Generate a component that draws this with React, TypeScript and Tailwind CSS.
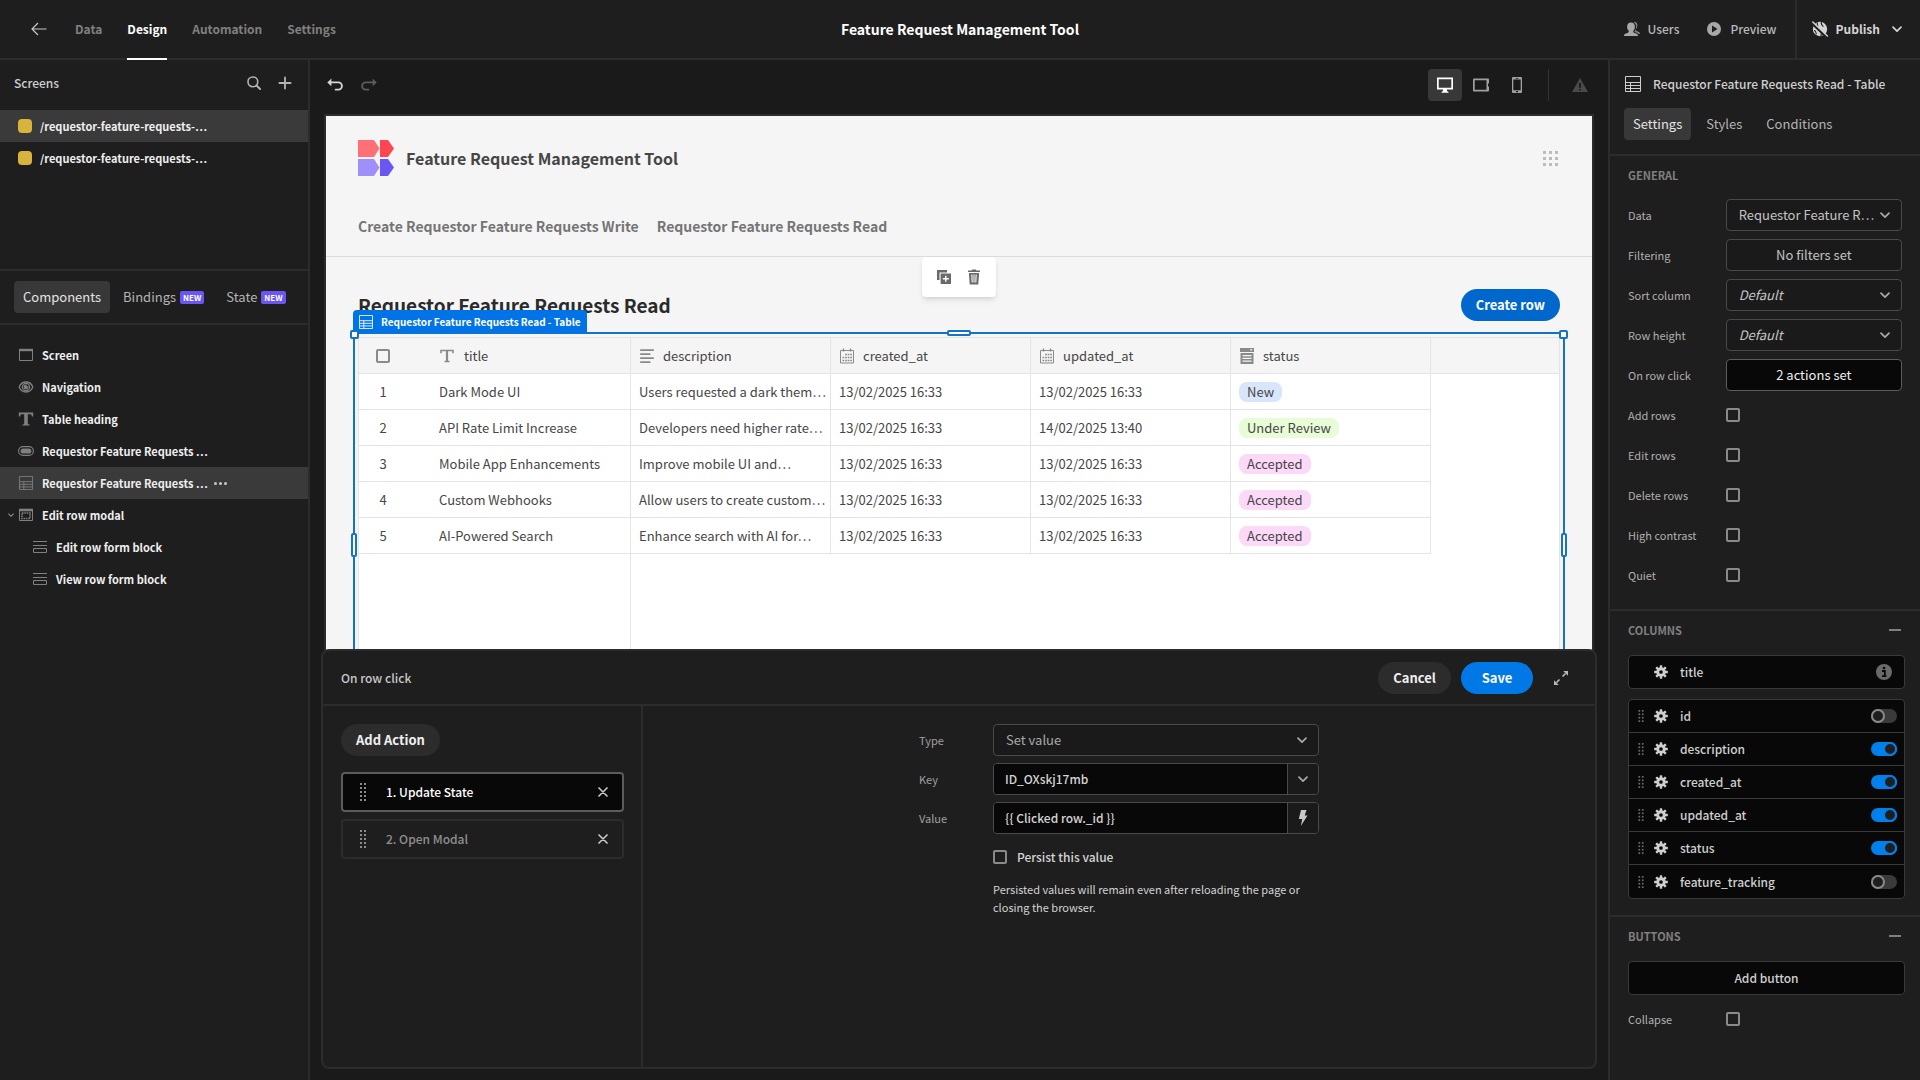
import React, { useState } from 'react';
import clsx from 'clsx';

type IconProps = { className?: string };

const ArrowLeftIcon = ({ className }: IconProps) => (
  <svg viewBox="0 0 16 16" className={className} fill="none" stroke="currentColor" strokeWidth="1.2">
    <path d="M15.5 8H1.2M7 2 1 8l6 6" />
  </svg>
);

const SearchIcon = ({ className }: IconProps) => (
  <svg viewBox="0 0 16 16" className={className} fill="none" stroke="currentColor" strokeWidth="1.8">
    <circle cx="6.7" cy="6.7" r="5.6" />
    <path d="m10.9 10.9 4 4" strokeWidth="2.2" strokeLinecap="round" />
  </svg>
);

const PlusIcon = ({ className }: IconProps) => (
  <svg viewBox="0 0 14 14" className={className} stroke="currentColor" strokeWidth="1.8" strokeLinecap="round">
    <path d="M7 1.4v11.2M1.4 7h11.2" />
  </svg>
);

const UndoIcon = ({ className }: IconProps) => (
  <svg viewBox="0 0 16 16" className={className} fill="none" stroke="currentColor" strokeWidth="1.9">
    <path d="M4 5.4h7.3a3.6 3.6 0 0 1 0 7.2H8.6" strokeLinecap="round" />
    <path d="M.3 5.4 4.4 1.6v7.6Z" fill="currentColor" stroke="none" />
  </svg>
);

const ChevronDownIcon = ({ className }: IconProps) => (
  <svg viewBox="0 0 10 10" className={className} fill="none" stroke="currentColor" strokeWidth="1.7" strokeLinecap="round" strokeLinejoin="round">
    <path d="M1 3.2 5 7.2l4-4" />
  </svg>
);

const CloseIcon = ({ className }: IconProps) => (
  <svg viewBox="0 0 12 12" className={className} stroke="currentColor" strokeWidth="2" strokeLinecap="round">
    <path d="m1.2 1.2 9.6 9.6M10.8 1.2l-9.6 9.6" />
  </svg>
);

const UsersIcon = ({ className }: IconProps) => (
  <svg viewBox="0 0 16 16" className={className} fill="currentColor">
    <path d="M11.4 12.2c-1.6-.5-2.2-.9-2.2-1.8 0-.5.3-.8.7-1.3.6-.8 1-2 1-3.4C10.9 3 9.4 1.5 7 1.5S3.1 3 3.1 5.7c0 1.4.4 2.6 1 3.4.4.5.7.8.7 1.3 0 .9-.6 1.3-2.2 1.8C.7 12.8 0 13.4 0 15h14c0-1.6-.7-2.2-2.6-2.8Z" />
    <path d="M10.2.8c1.9 0 3.2 1.3 3.2 3.7 0 1.3-.4 2.4-1 3.1-.3.4-.6.7-.6 1.2 0 .8.5 1.1 2 1.6 1.6.5 2.2 1.1 2.2 2.6h-1.5c-.6-.8-1.5-1.2-2.6-1.5-1.1-.4-1.3-.6-1.3-1.1 0-.3.2-.5.5-1 .7-1 1.100-2.300 1.100-3.700 0-2-.8-3.500-2.500-4.500Z" opacity=".75" />
  </svg>
);

const PlayCircleIcon = ({ className }: IconProps) => (
  <svg viewBox="0 0 14 14" className={className} fill="currentColor" fillRule="evenodd">
    <path d="M7 0a7 7 0 1 0 0 14A7 7 0 0 0 7 0ZM5 3.6 10.5 7 5 10.4Z" />
  </svg>
);

const GlobeStrikeIcon = ({ className }: IconProps) => (
  <svg viewBox="0 0 16 16" className={className}>
    <circle cx="8" cy="8" r="7.2" fill="currentColor" />
    <path d="M5.5 1.5c-1 2 .8 2.6.2 4.5M9.8 1.2c-1.8 1.6.4 2.8 1.6 4.6M2 9.5c1.6 0 2 1.5 2.3 3.8M9 15c-.5-2.2 1-3 1.8-3.8" stroke="#1e1e1e" strokeWidth="1.1" fill="none" />
    <path d="M.3 2.5 14 15.7" stroke="#1e1e1e" strokeWidth="2.4" />
    <path d="M.8 1 15.4 15" stroke="currentColor" strokeWidth="1.5" strokeLinecap="round" />
  </svg>
);

const TableIcon = ({ className }: IconProps) => (
  <svg viewBox="0 0 16 16" className={className} fill="none" stroke="currentColor" strokeWidth="1">
    <path d="M.5.5h15v15H.5ZM.5 6.5h15M.5 9.5h15M.5 12.5h15M5.5 6.5v9" />
  </svg>
);

const ScreenIcon = ({ className }: IconProps) => (
  <svg viewBox="0 0 16 14" className={className} fill="none" stroke="currentColor" strokeWidth="1">
    <path d="M1.5 1.5h13v11h-13Z" />
    <path d="M1 2h14" strokeWidth="2.4" />
  </svg>
);

const EyeIcon = ({ className }: IconProps) => (
  <svg viewBox="0 0 16 14" className={className} fill="none" stroke="currentColor" strokeWidth="1.3">
    <path d="M8 2C4.5 2 2.2 4.4 1.2 7c1 2.6 3.3 5 6.8 5s5.8-2.4 6.8-5C13.8 4.4 11.5 2 8 2Z" />
    <circle cx="8" cy="7" r="3.6" />
    <path d="M8 5.2A1.8 1.8 0 1 0 9.8 7L8 7Z" fill="currentColor" />
  </svg>
);

const TextIcon = ({ className }: IconProps) => (
  <svg viewBox="0 0 16 14" className={className} fill="currentColor">
    <path d="M.8.5h14.4v4h-1.3c-.2-1.6-.6-2.2-2-2.2H9.8v9c0 1 .4 1.2 1.8 1.3v.9H4.4v-.9c1.4-.1 1.8-.3 1.8-1.3v-9H4.1c-1.4 0-1.8.6-2 2.2H.8Z" />
  </svg>
);

const ThinTextIcon = ({ className }: IconProps) => (
  <svg viewBox="0 0 14 14" className={className} fill="none" stroke="currentColor" strokeWidth="1.6">
    <path d="M1 4.3V1.5h12v2.8M4.5 12.5h5" />
    <path d="M7 1.5v11" strokeWidth="2.2" />
  </svg>
);

const ButtonIcon = ({ className }: IconProps) => (
  <svg viewBox="0 0 16 14" className={className}>
    <rect x=".6" y="2.6" width="14.8" height="8.8" rx="4.4" fill="none" stroke="currentColor" strokeWidth="1.1" />
    <rect x="2.6" y="4.4" width="10.8" height="5.2" rx="2.6" fill="currentColor" />
  </svg>
);

const ModalIcon = ({ className }: IconProps) => (
  <svg viewBox="0 0 16 14" className={className} fill="none" stroke="currentColor" strokeWidth="1">
    <path d="M1.5 1.5h13v11h-13Z" />
    <path d="M1 2h14" strokeWidth="2.6" />
    <rect x="4" y="5" width="8" height="5.5" strokeWidth="1.6" strokeDasharray="1.5 .8" />
  </svg>
);

const FormIcon = ({ className }: IconProps) => (
  <svg viewBox="0 0 14 14" className={className} fill="none" stroke="currentColor" strokeWidth="1">
    <path d="M0 1.5h14M0 5.5h14M.5 8.5h13v4H.5Z" />
  </svg>
);

const LinesIcon = ({ className }: IconProps) => (
  <svg viewBox="0 0 14 14" className={className} stroke="currentColor" strokeWidth="1.5">
    <path d="M1 1.8h12M1 5.3h9M1 8.8h12M1 12.300h9" />
  </svg>
);

const CalendarIcon = ({ className }: IconProps) => (
  <svg viewBox="0 0 16 16" className={className} fill="none" stroke="currentColor" strokeWidth="1">
    <path d="M1.5 2.5h13v12.5h-13Z" />
    <path d="M4.5.5v3M11.5.5v3" strokeWidth="1.4" />
    <path d="M6 6.5h7M3.500 9.500h9.500M3.500 12.500h9.500" strokeWidth="1.7" strokeDasharray="1.7 .9" />
  </svg>
);

const OptionsIcon = ({ className }: IconProps) => (
  <svg viewBox="0 0 14 16" className={className} fill="currentColor" fillRule="evenodd">
    <path d="M0 0h14v4H0ZM9.6 1.2l1.5 1.8 1.5-1.8ZM.5 5h13v11H.5ZM2.5 7v1.2h9V7ZM2.5 9.8V11h9V9.8ZM2.5 12.6v1.2h9v-1.2Z" />
  </svg>
);

const DesktopIcon = ({ className }: IconProps) => (
  <svg viewBox="0 0 16 16" className={className} fill="currentColor" fillRule="evenodd">
    <path d="M0 .5h16v12h-6v1.5l1.500 1v.8h-7V15L6 14v-1.500H0ZM1.700 2.200v8.600h12.600V2.200Z" />
  </svg>
);

const TabletIcon = ({ className }: IconProps) => (
  <svg viewBox="0 0 16 14" className={className} fill="currentColor" fillRule="evenodd">
    <path d="M1 .5h14a1 1 0 0 1 1 1v4h-1v3h1v4a1 1 0 0 1-1 1H1a1 1 0 0 1-1-1v-11a1 1 0 0 1 1-1ZM1.7 2.2v9.6h11.8V2.2Z" />
  </svg>
);

const PhoneIcon = ({ className }: IconProps) => (
  <svg viewBox="0 0 10 16" className={className} fill="currentColor" fillRule="evenodd">
    <path d="M1 0h8a1 1 0 0 1 1 1v14a1 1 0 0 1-1 1H1a1 1 0 0 1-1-1V1a1 1 0 0 1 1-1ZM1.3 2.5v10.8h7.4V2.5ZM3.8.9v.8h2.4V.9ZM4 14v1.2h2V14Z" />
  </svg>
);

const AlertIcon = ({ className }: IconProps) => (
  <svg viewBox="0 0 16 14" className={className} fill="currentColor" fillRule="evenodd">
    <path d="M8 0 16 14H0ZM7.1 5v4.8h1.8V5ZM7.1 10.9v1.7h1.8v-1.7Z" />
  </svg>
);

const DuplicateIcon = ({ className }: IconProps) => (
  <svg viewBox="0 0 14 14" className={className} fill="currentColor" fillRule="evenodd">
    <path d="M0 0h10v2.5H2.5V10H0Z" />
    <path d="M3.6 3.6H14V14H3.6ZM8.1 5.8v2.3H5.8v1.4h2.3v2.3h1.4V9.5h2.3V8.1H9.5V5.8Z" />
  </svg>
);

const TrashIcon = ({ className }: IconProps) => (
  <svg viewBox="0 0 14 16" className={className} fill="currentColor" fillRule="evenodd">
    <path d="M4.5 1.5 5.2.5h3.6l.7 1H13v1.6H1V1.5ZM1.9 4h10.2l-.8 11.5H2.7ZM4.3 5.5l.4 8h1l-.3-8ZM6.5 5.5v8h1v-8ZM8.6 5.5l-.3 8h1l.4-8Z" />
  </svg>
);

const GearIcon = ({ className }: IconProps) => (
  <svg viewBox="0 0 16 16" className={className}>
    {[0, 45, 90, 135].map((angle) => (
      <rect key={angle} x="6.6" y=".2" width="2.8" height="15.6" rx=".6" fill="currentColor" transform={`rotate(${angle} 8 8)`} />
    ))}
    <circle cx="8" cy="8" r="5.4" fill="currentColor" />
    <circle cx="8" cy="8" r="2.1" fill="#080808" />
  </svg>
);

const InfoIcon = ({ className }: IconProps) => (
  <svg viewBox="0 0 16 16" className={className}>
    <circle cx="8" cy="8" r="8" fill="currentColor" />
    <path d="M6 7h2.8v5M6 12.2h4.4" stroke="#080808" strokeWidth="1.8" fill="none" />
    <circle cx="8" cy="4" r="1.3" fill="#080808" />
  </svg>
);

const BoltIcon = ({ className }: IconProps) => (
  <svg viewBox="0 0 10 16" className={className} fill="currentColor">
    <path d="M3 0h5.5L6.7 5.5H9.5L2.8 16l1.500-7H.8Z" />
  </svg>
);

const ExpandIcon = ({ className }: IconProps) => (
  <svg viewBox="0 0 14 14" className={className} fill="none" stroke="currentColor">
    <path d="m8.5 5.5 3-3M5.5 8.500l-3 3" strokeWidth="1.6" />
    <path d="M9.200 0H14v4.800ZM0 9.200V14h4.800Z" fill="currentColor" stroke="none" />
  </svg>
);

const DragDots = ({ rows, className }: { rows: number; className?: string }) => (
  <svg viewBox={`0 0 6 ${rows * 4 - 2}`} className={className} fill="currentColor">
    {Array.from({ length: rows }, (_, i) => (
      <React.Fragment key={i}>
        <rect x="0" y={i * 4} width="2" height="2" />
        <rect x="4" y={i * 4} width="2" height="2" />
      </React.Fragment>
    ))}
  </svg>
);

const LogoMark = () => (
  <svg viewBox="0 0 36 36" className="size-9">
    <path d="M0 0h16l5.5 8.5L16 17H0Z" fill="#ff7076" />
    <path d="M22 0h8l6 8.5-6 8.5h-8Z" fill="#ff4550" />
    <path d="M0 19h16l5.5 8.5L16 36H0Z" fill="#9f8ff9" />
    <path d="M22 19h8l6 8.5-6 8.5h-8Z" fill="#6a56f5" />
  </svg>
);

const NAV_TABS = ['Data', 'Design', 'Automation', 'Settings'];

const SCREENS = ['/requestor-feature-requests-…', '/requestor-feature-requests-…'];

const COMPONENT_TREE = [
  { label: 'Screen', icon: ScreenIcon },
  { label: 'Navigation', icon: EyeIcon },
  { label: 'Table heading', icon: TextIcon },
  { label: 'Requestor Feature Requests …', icon: ButtonIcon },
  { label: 'Requestor Feature Requests …', icon: TableIcon, selected: true },
  { label: 'Edit row modal', icon: ModalIcon, open: true },
  { label: 'Edit row form block', icon: FormIcon, nested: true },
  { label: 'View row form block', icon: FormIcon, nested: true },
];

const TABLE_COLUMNS = [
  { name: 'description', icon: LinesIcon },
  { name: 'created_at', icon: CalendarIcon },
  { name: 'updated_at', icon: CalendarIcon },
  { name: 'status', icon: OptionsIcon },
];

const STATUS_COLORS: Record<string, string> = {
  New: 'bg-[#d9e5fb]',
  'Under Review': 'bg-[#e8fcd7]',
  Accepted: 'bg-[#fdd9f8]',
};

const ROWS = [
  { title: 'Dark Mode UI', description: 'Users requested a dark them…', created: '13/02/2025 16:33', updated: '13/02/2025 16:33', status: 'New' },
  { title: 'API Rate Limit Increase', description: 'Developers need higher rate…', created: '13/02/2025 16:33', updated: '14/02/2025 13:40', status: 'Under Review' },
  { title: 'Mobile App Enhancements', description: 'Improve mobile UI and…', created: '13/02/2025 16:33', updated: '13/02/2025 16:33', status: 'Accepted' },
  { title: 'Custom Webhooks', description: 'Allow users to create custom…', created: '13/02/2025 16:33', updated: '13/02/2025 16:33', status: 'Accepted' },
  { title: 'AI-Powered Search', description: 'Enhance search with AI for…', created: '13/02/2025 16:33', updated: '13/02/2025 16:33', status: 'Accepted' },
];

const TOGGLES = ['Add rows', 'Edit rows', 'Delete rows', 'High contrast', 'Quiet'];

const FIELD_COLUMNS = [
  { name: 'id', visible: false },
  { name: 'description', visible: true },
  { name: 'created_at', visible: true },
  { name: 'updated_at', visible: true },
  { name: 'status', visible: true },
  { name: 'feature_tracking', visible: false },
];

const CHECKBOX = 'block size-3.5 shrink-0 appearance-none rounded-xs border-2 border-[#8a8a8a] checked:bg-[#0080eb]';
const CELL = 'border-r border-b border-[#e4e4e4]';

function Header() {
  return (
    <header className="grid h-[60px] shrink-0 grid-cols-[1fr_auto_1fr] border-b-2 border-[#2c2c2c]">
      <div className="flex items-center pl-[31px]">
        <button aria-label="Back" className="mr-7 text-[#c8c8c8]">
          <ArrowLeftIcon className="size-4" />
        </button>
        <nav className="flex h-full gap-[25px] text-xs font-semibold">
          {NAV_TABS.map((tab) => (
            <a
              key={tab}
              href="#"
              className={clsx(
                '-mb-0.5 flex h-[60px] items-center border-b-2',
                tab === 'Design' ? 'border-white text-white' : 'border-transparent text-[#808080]'
              )}
            >
              {tab}
            </a>
          ))}
        </nav>
      </div>
      <h1 className="flex items-center text-sm font-semibold text-white">Feature Request Management Tool</h1>
      <div className="flex items-center justify-end text-xs font-medium text-[#b8b8b8]">
        <button className="mr-7 flex items-center gap-2">
          <UsersIcon className="size-4 text-[#a8a8a8]" />
          Users
        </button>
        <button className="mr-[18px] flex items-center gap-[9px]">
          <PlayCircleIcon className="size-3.5 text-[#a8a8a8]" />
          Preview
        </button>
        <button className="flex h-full items-center gap-2 border-l-2 border-[#2c2c2c] pr-[18px] pl-[15px] font-semibold text-[#d4d4d4]">
          <GlobeStrikeIcon className="size-4" />
          Publish
          <ChevronDownIcon className="ml-1 size-2.5" />
        </button>
      </div>
    </header>
  );
}

function LeftPanel() {
  return (
    <aside className="flex w-[310px] shrink-0 flex-col border-r-2 border-[#2c2c2c]">
      <section className="h-[211px] border-b-2 border-[#2c2c2c]">
        <div className="flex h-[50px] items-center pr-4 pb-1 pl-3.5 text-[#b4b4b4]">
          <h2 className="flex-1 text-xs font-medium text-[#cfcfcf]">Screens</h2>
          <button aria-label="Search" className="mr-[17px]">
            <SearchIcon className="size-3.5" />
          </button>
          <button aria-label="Add screen">
            <PlusIcon className="size-3.5" />
          </button>
        </div>
        {SCREENS.map((screen, i) => (
          <a key={i} href="#" className={clsx('flex h-8 items-center gap-2 pl-[18px] text-[11px] font-bold text-[#efefef]', i === 0 && 'bg-[#3a3a3a]')}>
            <span className="size-3.5 rounded bg-[#d7b43b]" />
            {screen}
          </a>
        ))}
      </section>

      <div className="flex h-[54px] shrink-0 items-center gap-1 border-b-2 border-[#2c2c2c] pl-3.5 text-[13px] text-[#b4b4b4]">
        <button className="flex h-8 items-center rounded bg-[#383838] px-[9px] text-[#e4e4e4]">Components</button>
        <button className="flex h-8 items-center gap-1 px-[9px]">
          Bindings
          <span className="rounded-xs bg-[#6a56f5] px-[3px] text-[8px] leading-[13px] font-bold text-white">NEW</span>
        </button>
        <button className="flex h-8 items-center gap-1 px-[9px]">
          State
          <span className="rounded-xs bg-[#6a56f5] px-[3px] text-[8px] leading-[13px] font-bold text-white">NEW</span>
        </button>
      </div>

      <ul className="pt-3.5 text-[11px] font-bold text-[#efefef]">
        {COMPONENT_TREE.map(({ label, icon: Icon, selected, open, nested }, i) => (
          <li key={i} className={clsx('flex h-8 items-center', nested ? 'pl-[33px]' : open ? 'pl-2' : 'pl-[18px]', selected && 'bg-[#3a3a3a]')}>
            {open && <ChevronDownIcon className="mr-1 size-1.5 text-[#8f8f8f]" />}
            <Icon className={clsx('h-3.5 text-[#808080]', nested ? 'mr-[9px] w-3.5' : 'mr-2 w-4')} />
            {label}
            {selected && (
              <button aria-label="More" className="ml-1.5 flex gap-0.5">
                <span className="size-[3px] rounded-full bg-[#c8c8c8]" />
                <span className="size-[3px] rounded-full bg-[#c8c8c8]" />
                <span className="size-[3px] rounded-full bg-[#c8c8c8]" />
              </button>
            )}
          </li>
        ))}
      </ul>
    </aside>
  );
}

function DataTable() {
  return (
    <div className="flex h-[420px] flex-col border border-[#e4e4e4] bg-white">
      <table className="w-full table-fixed border-separate border-spacing-0 text-left text-[13px] text-[#464646]">
        <thead>
          <tr className="h-9 bg-[#f5f5f5]">
            <th className="w-12 border-b border-[#e4e4e4] pl-[17px]">
              <input type="checkbox" aria-label="Select all rows" className={CHECKBOX} />
            </th>
            <th className={clsx(CELL, 'w-56 pl-[33px] font-normal')}>
              <span className="flex items-center gap-2.5">
                <ThinTextIcon className="size-3.5 text-[#8a8a8a]" />
                title
              </span>
            </th>
            {TABLE_COLUMNS.map(({ name, icon: Icon }) => (
              <th key={name} className={clsx(CELL, 'w-[200px] pl-2 font-normal')}>
                <span className="flex items-center gap-2">
                  <Icon className="size-4 text-[#8a8a8a]" />
                  {name}
                </span>
              </th>
            ))}
            <th className="border-b border-[#e4e4e4]" />
          </tr>
        </thead>
        <tbody>
          {ROWS.map((row, i) => (
            <tr key={row.title} className="h-9 whitespace-nowrap">
              <td className="border-b border-[#e4e4e4] text-center">{i + 1}</td>
              <td className={clsx(CELL, 'pl-8')}>{row.title}</td>
              <td className={clsx(CELL, 'pl-2')}>{row.description}</td>
              <td className={clsx(CELL, 'pl-2')}>{row.created}</td>
              <td className={clsx(CELL, 'pl-2')}>{row.updated}</td>
              <td className={clsx(CELL, 'pl-2')}>
                <span className={clsx('inline-block rounded-lg px-2 leading-5', STATUS_COLORS[row.status])}>{row.status}</span>
              </td>
              <td />
            </tr>
          ))}
        </tbody>
      </table>
      <div className="w-[272px] flex-1 border-r border-[#e4e4e4]" />
    </div>
  );
}

function Preview() {
  return (
    <div className="mx-3.5 h-full overflow-hidden border-2 border-[#2c2c2c] bg-[#f5f5f5]">
      <div className="border-b border-[#dcdcdc] px-8 pt-6 pb-4">
        <div className="flex h-9 items-center gap-3">
          <LogoMark />
          <h2 className="flex-1 text-base font-semibold text-[#464646]">Feature Request Management Tool</h2>
          <button aria-label="Apps" className="mr-0.5 grid grid-cols-3 gap-[3px]">
            {Array.from({ length: 9 }, (_, i) => (
              <span key={i} className="size-[3px] bg-[#bcbcbc]" />
            ))}
          </button>
        </div>
        <nav className="mt-9 flex h-7 items-center gap-[18px] text-sm font-semibold text-[#757575]">
          <a href="#">Create Requestor Feature Requests Write</a>
          <a href="#">Requestor Feature Requests Read</a>
        </nav>
      </div>

      <div className="px-8 pt-8">
        <div className="flex h-8 items-center justify-between">
          <h3 className="text-[19px] font-semibold text-[#2b2b2b]">Requestor Feature Requests Read</h3>
          <button className="h-8 rounded-full bg-[#0068cc] px-[15px] text-[13px] font-semibold text-white">Create row</button>
        </div>
        <div className="relative mt-4">
          <DataTable />
          {/* Selection frame drawn over the table */}
          <div className="pointer-events-none absolute -inset-[5px] border-2 border-[#1473c8]">
            <div className="absolute -top-[24px] -left-0.5 flex h-[23px] items-center gap-2 rounded-t bg-[#0073e6] px-1.5 text-[10px] font-bold whitespace-nowrap text-white">
              <TableIcon className="size-3.5" />
              Requestor Feature Requests Read - Table
            </div>
            <span className="absolute -top-1 -left-[5px] size-[9px] rounded-xs border-2 border-[#1473c8] bg-white" />
            <span className="absolute -top-1 -right-[5px] size-[9px] rounded-xs border-2 border-[#1473c8] bg-white" />
            <span className="absolute -top-1 left-1/2 h-1.5 w-6 -translate-x-1/2 rounded-xs border-2 border-[#1473c8] bg-white" />
            <span className="absolute top-[199px] -left-1 h-6 w-1.5 rounded-xs border-2 border-[#1473c8] bg-white" />
            <span className="absolute top-[199px] -right-1 h-6 w-1.5 rounded-xs border-2 border-[#1473c8] bg-white" />
          </div>
          <div className="absolute -top-20 left-1/2 flex h-10 w-[74px] -translate-x-1/2 items-center justify-center gap-4 rounded bg-white text-[#6a6a6a] shadow-md">
            <button aria-label="Duplicate">
              <DuplicateIcon className="size-3.5" />
            </button>
            <button aria-label="Delete">
              <TrashIcon className="h-4 w-3.5" />
            </button>
          </div>
        </div>
      </div>
    </div>
  );
}

function ActionDrawer() {
  const [active, setActive] = useState(0);

  return (
    <section className="absolute inset-x-[11px] bottom-[11px] flex h-[420px] flex-col rounded-lg border-2 border-[#2c2c2c] bg-[#1e1e1e]">
      <div className="flex h-[55px] items-center border-b-2 border-[#2c2c2c] pr-[27px] pl-[18px]">
        <h2 className="flex-1 text-xs font-medium text-[#c8c8c8]">On row click</h2>
        <button className="h-8 w-[73px] rounded-full bg-[#2c2c2c] text-[13px] font-semibold text-[#efefef]">Cancel</button>
        <button className="ml-2.5 h-8 w-[72px] rounded-full bg-[#0078e6] text-[13px] font-semibold text-white">Save</button>
        <button aria-label="Expand" className="ml-[21px] text-[#b8b8b8]">
          <ExpandIcon className="size-3.5" />
        </button>
      </div>

      <div className="flex flex-1">
        <div className="w-80 border-r-2 border-[#2c2c2c] pt-[18px] pr-[17px] pl-[18px]">
          <button className="mb-4 h-8 rounded-full bg-[#2c2c2c] px-[15px] text-[13px] font-semibold text-[#efefef]">Add Action</button>
          <ul className="space-y-[7px]">
            {['1. Update State', '2. Open Modal'].map((label, i) => (
              <li
                key={label}
                onClick={() => setActive(i)}
                className={clsx(
                  'flex h-10 items-center rounded border-2 pr-3.5 pl-[17px] text-xs font-medium',
                  active === i ? 'border-[#5c5c5c] bg-[#080808] text-white' : 'border-[#2c2c2c] text-[#8f8f8f]'
                )}
              >
                <DragDots rows={5} className="h-[18px] w-1.5 text-[#8a8a8a]" />
                <span className="ml-5 flex-1">{label}</span>
                <button aria-label="Remove action" className="text-[#c8c8c8]">
                  <CloseIcon className="size-2.5" />
                </button>
              </li>
            ))}
          </ul>
        </div>

        <div className="flex-1 pt-[18px]">
          <form className="mx-auto grid w-[400px] grid-cols-[74px_1fr] items-center gap-y-[7px] text-xs text-[#d4d4d4]">
            <label htmlFor="type" className="text-[11px] text-[#a0a0a0]">Type</label>
            <div className="relative">
              <select id="type" className="h-8 w-full appearance-none rounded border border-[#4a4a4a] bg-[#1a1a1a] pl-3 text-[13px] text-[#a8a8a8]">
                <option>Set value</option>
              </select>
              <ChevronDownIcon className="pointer-events-none absolute top-[11px] right-3 size-2.5 text-[#a8a8a8]" />
            </div>
            <label htmlFor="key" className="text-[11px] text-[#a0a0a0]">Key</label>
            <div className="flex h-8 overflow-hidden rounded border border-[#4a4a4a]">
              <input id="key" defaultValue="ID_OXskj17mb" className="min-w-0 flex-1 bg-[#080808] px-[11px] font-medium" />
              <button type="button" aria-label="Pick key" className="flex w-[31px] items-center justify-center border-l border-[#4a4a4a] bg-[#1a1a1a] text-[#a8a8a8]">
                <ChevronDownIcon className="size-2.5" />
              </button>
            </div>
            <label htmlFor="value" className="text-[11px] text-[#a0a0a0]">Value</label>
            <div className="flex h-8 overflow-hidden rounded border border-[#4a4a4a]">
              <input id="value" defaultValue="{{ Clicked row._id }}" className="min-w-0 flex-1 bg-[#080808] px-[11px] font-medium" />
              <button type="button" aria-label="Bind value" className="flex w-[31px] items-center justify-center border-l border-[#4a4a4a] bg-[#1a1a1a] text-[#c8c8c8]">
                <BoltIcon className="h-4 w-2.5" />
              </button>
            </div>
            <label className="col-start-2 flex h-8 items-center gap-2.5 font-medium">
              <input type="checkbox" className={CHECKBOX} />
              Persist this value
            </label>
            <p className="col-start-2 text-[11px] leading-[18px] text-[#d4d4d4]">
              Persisted values will remain even after reloading the page or closing the browser.
            </p>
          </form>
        </div>
      </div>
    </section>
  );
}

function SelectField({ id, label, value, italic }: { id: string; label: string; value: string; italic?: boolean }) {
  return (
    <div className="flex h-8 items-center">
      <label htmlFor={id} className="w-[98px] text-[11px] text-[#b0b0b0]">{label}</label>
      <div className="relative w-[177px]">
        <select
          id={id}
          className={clsx(
            'h-8 w-full appearance-none rounded border border-[#4a4a4a] bg-[#1a1a1a] pr-6 pl-3 text-[13px] text-[#c4c4c4]',
            italic && 'italic'
          )}
        >
          <option>{value}</option>
        </select>
        <ChevronDownIcon className="pointer-events-none absolute top-[11px] right-3 size-2.5 text-[#a8a8a8]" />
      </div>
    </div>
  );
}

function CheckField({ label }: { label: string }) {
  return (
    <label className="flex h-8 items-center text-[11px] text-[#b0b0b0]">
      <span className="w-[98px]">{label}</span>
      <input type="checkbox" className={CHECKBOX} />
    </label>
  );
}

function SectionTitle({ title }: { title: string }) {
  return (
    <div className="flex h-[38px] items-center justify-between pr-1 text-[#808080]">
      <h3 className="text-[11px] font-semibold">{title}</h3>
      <button aria-label={`Collapse ${title}`} className="py-2">
        <span className="block h-0.5 w-3 bg-[#808080]" />
      </button>
    </div>
  );
}

function RightPanel() {
  return (
    <aside className="w-[312px] shrink-0 border-l-2 border-[#2c2c2c]">
      <div className="h-24 border-b-2 border-[#2c2c2c] px-3.5">
        <div className="flex h-12 items-center gap-3 pl-px text-xs font-medium whitespace-nowrap text-[#cfcfcf]">
          <TableIcon className="size-4 shrink-0" />
          Requestor Feature Requests Read - Table
        </div>
        <div className="flex gap-1.5 text-[13px] text-[#b4b4b4]">
          <button className="h-8 rounded bg-[#383838] px-[9px] text-[#e4e4e4]">Settings</button>
          <button className="h-8 px-[9px]">Styles</button>
          <button className="h-8 px-[9px]">Conditions</button>
        </div>
      </div>

      <section className="h-[455px] border-b-2 border-[#2c2c2c] px-[18px]">
        <h3 className="flex h-[43px] items-center pb-1 text-[11px] font-semibold text-[#808080]">GENERAL</h3>
        <div className="space-y-2">
          <SelectField id="data" label="Data" value="Requestor Feature R…" />
          <div className="flex h-8 items-center text-[11px] text-[#b0b0b0]">
            <span className="w-[98px]">Filtering</span>
            <button className="h-8 w-[177px] rounded border border-[#4a4a4a] bg-[#1a1a1a] text-[13px] text-[#c4c4c4]">No filters set</button>
          </div>
          <SelectField id="sort" label="Sort column" value="Default" italic />
          <SelectField id="height" label="Row height" value="Default" italic />
          <div className="flex h-8 items-center text-[11px] text-[#b0b0b0]">
            <span className="w-[98px]">On row click</span>
            <button className="h-8 w-[177px] rounded border border-[#5c5c5c] bg-[#080808] text-[13px] text-[#efefef]">2 actions set</button>
          </div>
          {TOGGLES.map((label) => (
            <CheckField key={label} label={label} />
          ))}
        </div>
      </section>

      <section className="border-b-2 border-[#2c2c2c] pr-[15px] pb-4 pl-[18px] text-xs font-medium text-[#cfcfcf]">
        <SectionTitle title="COLUMNS" />
        <div className="mt-1.5 flex h-[34px] items-center rounded border border-[#3a3a3a] bg-[#080808] pr-3 pl-[25px]">
          <GearIcon className="size-3.5" />
          <span className="ml-3 flex-1">title</span>
          <InfoIcon className="size-4 text-[#6a6a6a]" />
        </div>
        <ul className="mt-2.5 divide-y divide-[#3a3a3a] rounded border border-[#3a3a3a] bg-[#080808]">
          {FIELD_COLUMNS.map(({ name, visible }) => (
            <li key={name} className="flex h-[33px] items-center pr-[7px] pl-[9px]">
              <DragDots rows={4} className="mr-2.5 h-3 w-1.5 text-[#6a6a6a]" />
              <GearIcon className="size-3.5" />
              <label htmlFor={`show-${name}`} className="ml-3 flex-1">{name}</label>
              <input
                id={`show-${name}`}
                type="checkbox"
                role="switch"
                defaultChecked={visible}
                className="flex h-3.5 w-[26px] appearance-none rounded-full bg-[#3a3a3a] before:block before:size-3.5 before:rounded-full before:border-2 before:border-[#8a8a8a] before:bg-[#1e1e1e] checked:justify-end checked:bg-[#0080eb] checked:before:border-[#0080eb]"
              />
            </li>
          ))}
        </ul>
      </section>

      <section className="pr-[15px] pl-[18px]">
        <SectionTitle title="BUTTONS" />
        <button className="mt-1.5 h-[34px] w-full rounded border border-[#3a3a3a] bg-[#080808] text-xs font-medium text-[#cfcfcf]">Add button</button>
        <div className="mt-2">
          <CheckField label="Collapse" />
        </div>
      </section>
    </aside>
  );
}

export default function App() {
  return (
    <div className="flex h-screen flex-col overflow-hidden bg-[#1e1e1e] font-['Noto_Sans_CJK_SC',sans-serif]">
      <Header />
      <div className="flex min-h-0 flex-1">
        <LeftPanel />
        <main className="relative flex min-w-0 flex-1 flex-col bg-[#1a1a1a] pb-8">
          <div className="flex h-[54px] shrink-0 items-center pr-5 pb-1 pl-[17px] text-[#a0a0a0]">
            <button aria-label="Undo" className="text-[#d4d4d4]">
              <UndoIcon className="size-4" />
            </button>
            <button aria-label="Redo" className="ml-[18px] -scale-x-100 text-[#5c5c5c]">
              <UndoIcon className="size-4" />
            </button>
            <div className="ml-auto flex items-center">
              <button aria-label="Desktop" className="mr-[11px] flex h-8 w-[34px] items-center justify-center rounded bg-[#383838] text-white">
                <DesktopIcon className="size-4" />
              </button>
              <button aria-label="Tablet" className="mr-[23px]">
                <TabletIcon className="h-3.5 w-4" />
              </button>
              <button aria-label="Mobile">
                <PhoneIcon className="h-4 w-2.5" />
              </button>
              <span className="mr-[23px] ml-[26px] h-8 w-px bg-[#333333]" />
              <button aria-label="Warnings" className="text-[#4a4a4a]">
                <AlertIcon className="h-3.5 w-4" />
              </button>
            </div>
          </div>
          <div className="min-h-0 flex-1">
            <Preview />
          </div>
          <ActionDrawer />
        </main>
        <RightPanel />
      </div>
    </div>
  );
}
